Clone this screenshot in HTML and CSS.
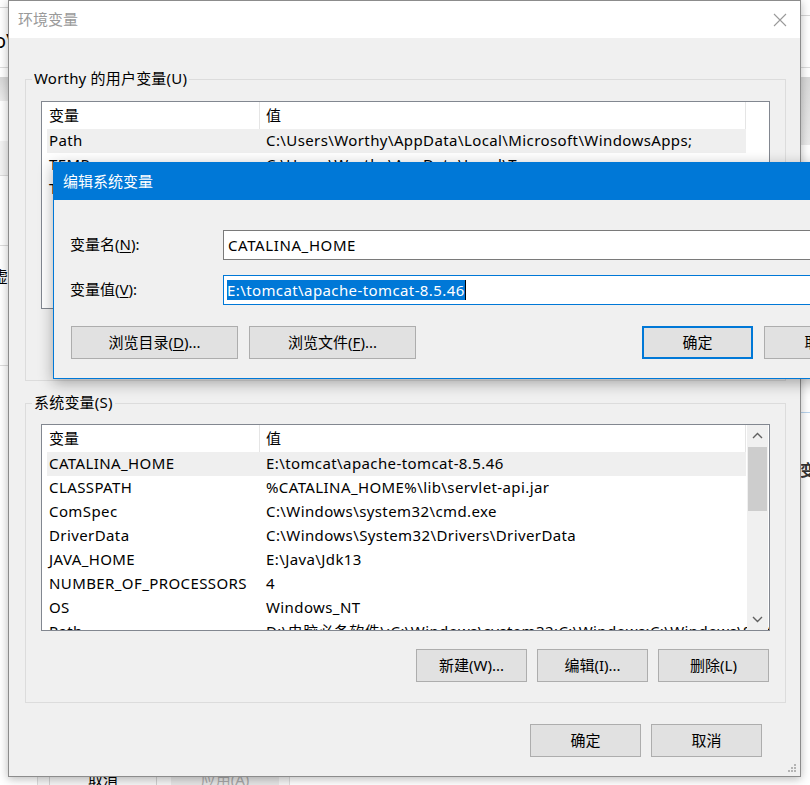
FILE: index.html
```html
<!DOCTYPE html>
<html lang="zh-CN">
<head>
<meta charset="utf-8">
<title>环境变量</title>
<link rel="stylesheet" href="styles.css">
</head>
<body>
<div class="bg">
  <div class="bg-left">
    <div class="bl-a"></div>
    <div class="bl-b"><span class="bl-txt">o\</span></div>
    <div class="bl-c"></div>
    <div class="bl-d"></div>
    <div class="bl-e"></div>
    <div class="bl-f"></div>
    <div class="bl-g"><span class="bl-dot">。</span></div>
    <div class="bl-h"><span class="bl-cj">虚</span></div>
    <div class="bl-i"></div>
  </div>
  <div class="bg-right">
    <div class="br-a"></div>
    <div class="br-b"></div>
    <div class="br-c"></div>
    <div class="br-d"></div>
    <div class="br-e"></div>
    <div class="br-f"><span>变</span></div>
  </div>
  <div class="bg-bottom">
    <div class="bb-btn">取消</div>
    <div class="bb-btn dis">应用(A)</div>
  </div>
</div>

<section class="env">
  <header class="env-title">
    <span>环境变量</span>
    <svg class="close" width="14" height="14" viewBox="0 0 14 14"><path d="M1 1 L13 13 M13 1 L1 13" stroke="#9a9a9a" stroke-width="1.1" fill="none"/></svg>
  </header>
  <div class="env-body">
    <fieldset class="group g-user">
      <legend>Worthy 的用户变量(U)</legend>
      <div class="list">
        <div class="cols">
          <div class="head"><span class="c1">变量</span><span class="c2">值</span></div>
          <div class="row sel"><span class="c1">Path</span><span class="c2">C:\Users\Worthy\AppData\Local\Microsoft\WindowsApps;</span></div>
          <div class="row"><span class="c1">TEMP</span><span class="c2">C:\Users\Worthy\AppData\Local\Temp</span></div>
          <div class="row"><span class="c1">TMP</span><span class="c2">C:\Users\Worthy\AppData\Local\Temp</span></div>
        </div>
      </div>
      <div class="list-btns">
        <button class="btn">新建(N)...</button>
        <button class="btn">编辑(E)...</button>
        <button class="btn">删除(D)</button>
      </div>
    </fieldset>

    <fieldset class="group g-sys">
      <legend>系统变量(S)</legend>
      <div class="list">
        <div class="cols">
          <div class="head"><span class="c1">变量</span><span class="c2">值</span></div>
          <div class="row sel"><span class="c1">CATALINA_HOME</span><span class="c2">E:\tomcat\apache-tomcat-8.5.46</span></div>
          <div class="row"><span class="c1">CLASSPATH</span><span class="c2">%CATALINA_HOME%\lib\servlet-api.jar</span></div>
          <div class="row"><span class="c1">ComSpec</span><span class="c2">C:\Windows\system32\cmd.exe</span></div>
          <div class="row"><span class="c1">DriverData</span><span class="c2">C:\Windows\System32\Drivers\DriverData</span></div>
          <div class="row"><span class="c1">JAVA_HOME</span><span class="c2">E:\Java\Jdk13</span></div>
          <div class="row"><span class="c1">NUMBER_OF_PROCESSORS</span><span class="c2">4</span></div>
          <div class="row"><span class="c1">OS</span><span class="c2">Windows_NT</span></div>
          <div class="row"><span class="c1">Path</span><span class="c2">D:\电脑必备软件\;C:\Windows\system32;C:\Windows;C:\Windows\System32\Wbem</span></div>
        </div>
        <div class="vscroll">
          <div class="arrow"><svg width="11" height="7" viewBox="0 0 11 7"><path d="M1 6 L5.5 1.5 L10 6" stroke="#606060" stroke-width="1.4" fill="none"/></svg></div>
          <div class="thumb"></div>
          <div class="track"></div>
          <div class="arrow"><svg width="11" height="7" viewBox="0 0 11 7"><path d="M1 1 L5.5 5.5 L10 1" stroke="#606060" stroke-width="1.4" fill="none"/></svg></div>
        </div>
      </div>
      <div class="list-btns">
        <button class="btn">新建(W)...</button>
        <button class="btn">编辑(I)...</button>
        <button class="btn">删除(L)</button>
      </div>
    </fieldset>

    <div class="footer">
      <button class="btn">确定</button>
      <button class="btn">取消</button>
    </div>
  </div>
  <svg class="grip" width="10" height="10" viewBox="0 0 10 10">
    <rect x="7" y="1" width="2" height="2" fill="#b4b4b4"/>
    <rect x="4" y="4" width="2" height="2" fill="#b4b4b4"/>
    <rect x="7" y="4" width="2" height="2" fill="#b4b4b4"/>
    <rect x="1" y="7" width="2" height="2" fill="#b4b4b4"/>
    <rect x="4" y="7" width="2" height="2" fill="#b4b4b4"/>
    <rect x="7" y="7" width="2" height="2" fill="#b4b4b4"/>
  </svg>
</section>

<section class="edit">
  <header class="edit-title">编辑系统变量</header>
  <div class="edit-body">
    <div class="field">
      <label class="lbl">变量名(<u>N</u>):</label>
      <div class="input">CATALINA_HOME</div>
    </div>
    <div class="field">
      <label class="lbl">变量值(<u>V</u>):</label>
      <div class="input focus"><span class="seltext">E:\tomcat\apache-tomcat-8.5.46</span><span class="caret"></span></div>
    </div>
    <div class="edit-btns">
      <button class="btn wide">浏览目录(<u>D</u>)...</button>
      <button class="btn wide">浏览文件(<u>F</u>)...</button>
      <button class="btn default">确定</button>
      <button class="btn">取消</button>
    </div>
  </div>
</section>
</body>
</html>
```

FILE: styles.css
```css
* { box-sizing: border-box; }
html, body { margin: 0; }
body {
  width: 810px;
  height: 785px;
  overflow: hidden;
  position: relative;
  font-family: "Noto Sans", "Noto Sans CJK SC", sans-serif;
  font-size: 15px;
  color: #000;
  background: #fff;
}

/* background window */
.bg { position: absolute; inset: 0; background: #fff; }
.bg-left { position: absolute; left: 0; top: 0; width: 8px; display: flex; flex-direction: column; overflow: hidden; }
.bl-a { height: 8px; border-bottom: 1px solid #d6d6d6; }
.bl-b { height: 60px; border-bottom: 1px solid #dcdcdc; overflow: hidden; }
.bl-txt { display: block; margin: 22px 0 0 -6px; font-size: 20px; line-height: 22px; white-space: nowrap; }
.bl-c { height: 9px; }
.bl-d { height: 24px; background: linear-gradient(#d6d6d6, #ececec); }
.bl-e { height: 40px; }
.bl-f { height: 35px; background: #f3f3f3; border-bottom: 1px solid #dcdcdc; }
.bl-g { height: 70px; border-bottom: 1px solid #dcdcdc; overflow: hidden; }
.bl-dot { display: block; margin: 28px 0 0 -8px; line-height: 20px; }
.bl-h { height: 120px; border-bottom: 1px solid #dcdcdc; overflow: hidden; }
.bl-cj { display: block; margin: 20px 0 0 -7px; line-height: 20px; }
.bl-i { height: 400px; }

.bg-right { position: absolute; left: 801px; top: 0; width: 9px; display: flex; flex-direction: column; overflow: hidden; }
.br-a { height: 16px; border-bottom: 1px solid #d6d6d6; }
.br-b { height: 52px; border-bottom: 1px solid #dcdcdc; }
.br-c { height: 9px; }
.br-d { height: 68px; background: linear-gradient(#d8d8d8, #eaeaea); }
.br-e { height: 268px; border-bottom: 1px solid #b9d4ee; }
.br-f { height: 100px; overflow: hidden; }
.br-f span { display: block; margin: 47px 0 0 -1px; font-weight: bold; font-size: 16px; line-height: 20px; color: #333; }

.bg-bottom { position: absolute; left: 37px; top: 762px; height: 40px; width: 253px; display: flex; gap: 14px; padding-left: 11px; border-left: 1px solid #dcdcdc; border-right: 1px solid #dcdcdc; background: #f5f5f5; }
.bb-btn { width: 108px; height: 34px; display: flex; align-items: flex-end; justify-content: center; padding-bottom: 6px; border: 1px solid #cfcfcf; background: #f5f5f5; }
.bb-btn.dis { background: #e6e6e6; color: #a8a8a8; border-color: #e6e6e6; }

/* main window */
.env {
  position: absolute;
  left: 8px;
  top: 0;
  width: 793px;
  height: 777px;
  border: 1px solid #8c8c8c;
  background: #f0f0f0;
  box-shadow: 0 2px 9px rgba(0,0,0,.28);
  display: flex;
  flex-direction: column;
}
.env-title {
  height: 37px;
  flex: none;
  background: #fff;
  color: #9a9a9a;
  display: flex;
  align-items: center;
  justify-content: space-between;
  padding: 0 13px 2px 9px;
}
.close { display: block; margin-top: 2px; }
.env-body { flex: 1; padding: 0 14px 0 16px; display: flex; flex-direction: column; }

.group {
  margin: 31px 0 0;
  border: 1px solid #dcdcdc;
  padding: 12px 15px 20px;
  min-width: 0;
}
.g-sys { margin-top: 12px; padding-top: 11px; }
.group legend { padding: 0 2px 2px; margin-left: -9px; line-height: 18px; letter-spacing: .2px; }

.list {
  height: 208px;
  border: 1px solid #828790;
  background: #fff;
  padding-left: 5px;
  display: flex;
  overflow: hidden;
}
.g-sys .list { height: 207px; }
.cols { width: 699px; flex: none; }
.head { height: 27px; display: flex; line-height: 26px; }
.head .c1 { width: 213px; padding-left: 2px; border-right: 1px solid #e5e5e5; }
.head .c2 { flex: 1; padding-left: 6px; border-right: 1px solid #e5e5e5; }
.row { height: 24px; display: flex; line-height: 22px; white-space: nowrap; letter-spacing: .4px; }
.row .c1 { width: 213px; flex: none; padding-left: 2px; }
.row .c2 { padding-left: 6px; }
.row.sel { background: #efefef; }

.vscroll { width: 21px; margin-left: 1px; background: #f0f0f0; display: flex; flex-direction: column; }
.arrow { height: 21px; display: flex; align-items: center; justify-content: center; flex: none; }
.thumb { height: 64px; margin: 1px 1px 0; background: #cdcdcd; flex: none; }
.track { flex: 1; }

.list-btns { display: flex; justify-content: flex-end; gap: 10px; margin-top: 18px; padding-right: 1px; }
.footer { display: flex; justify-content: flex-end; gap: 10px; margin-top: 21px; padding-right: 24px; }

.btn {
  width: 111px;
  height: 33px;
  padding: 0 0 2px;
  margin: 0;
  background: #e1e1e1;
  border: 1px solid #adadad;
  font: inherit;
  color: #000;
  display: flex;
  align-items: center;
  justify-content: center;
  flex: none;
}
.btn u { text-decoration-thickness: 1px; text-underline-offset: 2px; }

.grip { position: absolute; right: 3px; bottom: 3px; }

/* edit dialog */
.edit {
  position: absolute;
  left: 53px;
  top: 162px;
  width: 840px;
  height: 217px;
  border: 1px solid #0078d7;
  background: #f0f0f0;
  box-shadow: 0 4px 14px rgba(0,0,0,.32);
}
.edit-title {
  height: 37px;
  background: #0078d7;
  color: #fff;
  display: flex;
  align-items: center;
  padding: 0 0 2px 9px;
}
.edit-body { padding: 30px 0 0 16px; }
.field { display: flex; align-items: center; height: 30px; }
.field + .field { margin-top: 15px; }
.lbl { width: 153px; flex: none; line-height: 20px; padding-bottom: 3px; }
.lbl u, .edit-btns u { text-decoration-thickness: 1px; text-underline-offset: 2px; }
.input {
  width: 652px;
  height: 30px;
  border: 1px solid #7a7a7a;
  background: #fff;
  padding: 0 0 1px 4px;
  display: flex;
  align-items: center;
  white-space: nowrap;
  letter-spacing: .6px;
}
.input.focus { border-color: #0078d7; padding: 0 0 0 3px; letter-spacing: .4px; }
.seltext { background: #0078d7; color: #fff; line-height: 20px; }
.caret { width: 1px; height: 20px; background: #000; }

.edit-btns { display: flex; gap: 11px; margin-top: 21px; padding-left: 1px; }
.btn.wide { width: 167px; }
.btn.default { border: 2px solid #0078d7; margin-left: 215px; }
```
